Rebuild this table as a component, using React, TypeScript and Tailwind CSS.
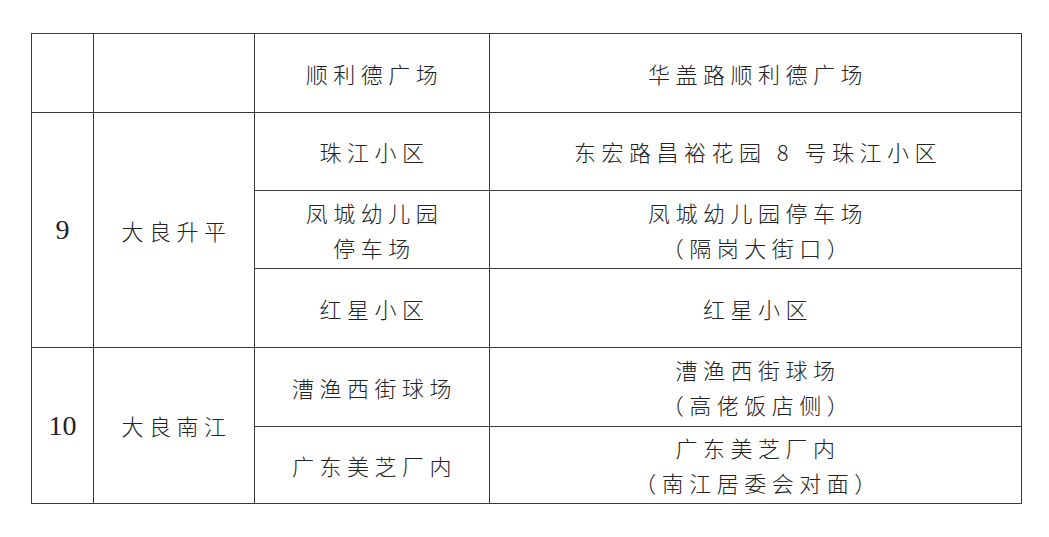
const cjk = "font-['Noto_Sans_CJK_SC','Noto_Sans_CJK_JP',sans-serif]";

function Cell({ lines, rowSpan }: { lines: string[]; rowSpan?: number }) {
  return (
    <td rowSpan={rowSpan} className="border border-[#3a3a3a] p-0 text-center align-middle">
      <div className={`${cjk} text-[22px] leading-[35px] tracking-[5.5px] pl-[5px] font-light text-[#222]`}>
        {lines.map((l) => (
          <div key={l}>{l}</div>
        ))}
      </div>
    </td>
  );
}

function Num({ n, rowSpan }: { n: string; rowSpan: number }) {
  return (
    <td rowSpan={rowSpan} className="border border-[#3a3a3a] p-0 text-center align-middle">
      <span className="font-['Liberation_Serif',serif] text-[28px] text-[#222]">{n}</span>
    </td>
  );
}

export default function App() {
  return (
    <div className="w-[1049px] h-[537px] bg-white pt-[33px] pl-[31px]">
      <table className="border-collapse table-fixed w-[990px]">
        <colgroup>
          <col className="w-[62px]" />
          <col className="w-[161px]" />
          <col className="w-[235px]" />
          <col className="w-[532px]" />
        </colgroup>
        <tbody>
          <tr className="h-[79px]">
            <td className="border border-[#3a3a3a]" />
            <td className="border border-[#3a3a3a]" />
            <Cell lines={["顺利德广场"]} />
            <Cell lines={["华盖路顺利德广场"]} />
          </tr>
          <tr className="h-[78px]">
            <Num n="9" rowSpan={3} />
            <Cell lines={["大良升平"]} rowSpan={3} />
            <Cell lines={["珠江小区"]} />
            <Cell lines={["东宏路昌裕花园 8 号珠江小区"]} />
          </tr>
          <tr className="h-[78px]">
            <Cell lines={["凤城幼儿园", "停车场"]} />
            <Cell lines={["凤城幼儿园停车场", "（隔岗大街口）"]} />
          </tr>
          <tr className="h-[79px]">
            <Cell lines={["红星小区"]} />
            <Cell lines={["红星小区"]} />
          </tr>
          <tr className="h-[79px]">
            <Num n="10" rowSpan={2} />
            <Cell lines={["大良南江"]} rowSpan={2} />
            <Cell lines={["漕渔西街球场"]} />
            <Cell lines={["漕渔西街球场", "（高佬饭店侧）"]} />
          </tr>
          <tr className="h-[77px]">
            <Cell lines={["广东美芝厂内"]} />
            <Cell lines={["广东美芝厂内", "（南江居委会对面）"]} />
          </tr>
        </tbody>
      </table>
    </div>
  );
}
